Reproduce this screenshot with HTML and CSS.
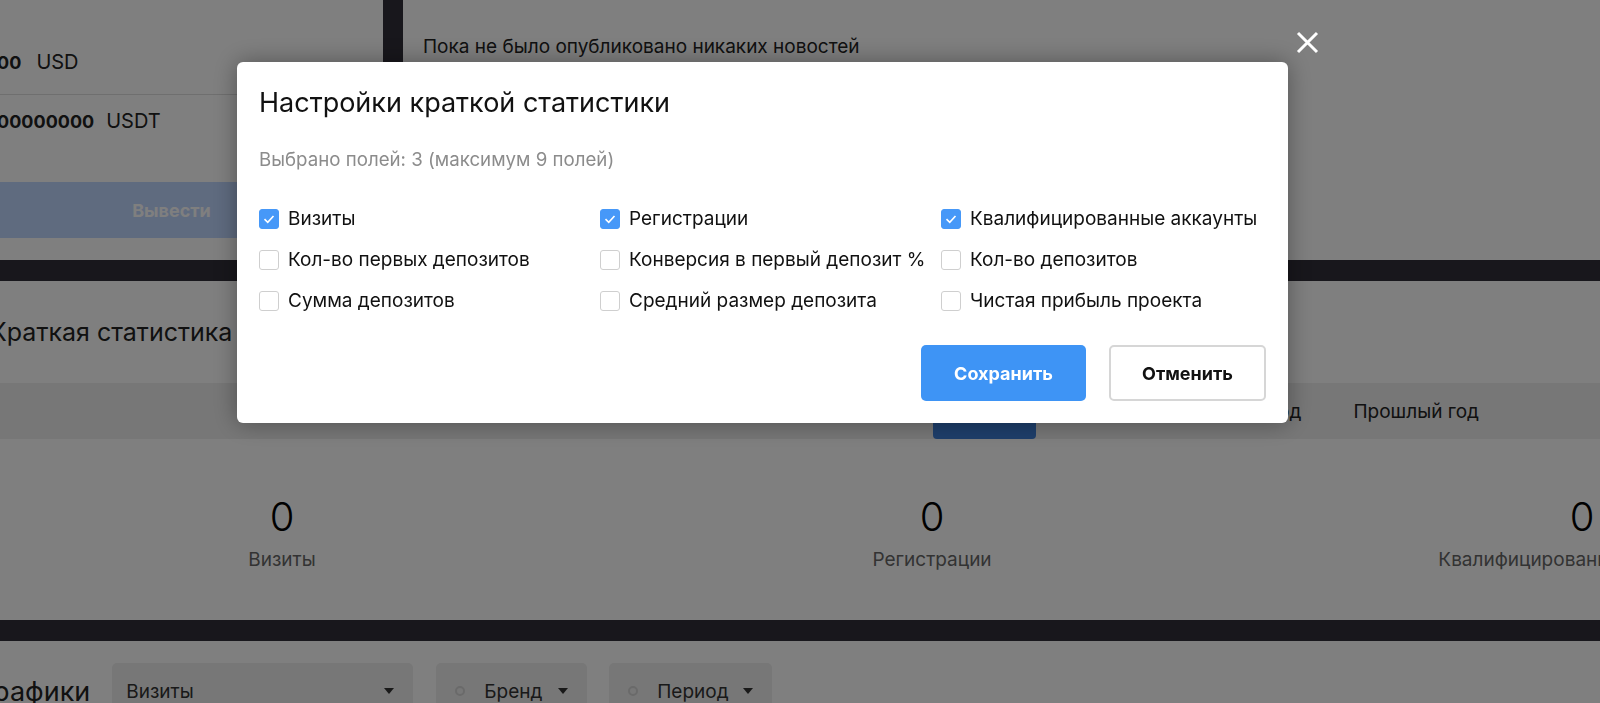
FILE: index.html
```html
<!DOCTYPE html>
<html lang="ru">
<head>
  <meta charset="UTF-8">
  <meta name="viewport" content="width=device-width, initial-scale=1.0">
  <title>Партнёрский кабинет</title>
  <link rel="stylesheet" href="styles.css">
</head>
<body>
  <!-- Page behind the dialog -->
  <div class="page">
    <div class="top-row">
      <div class="card wallet">
        <div class="balance-row first"><b>0.00</b><span class="cur">USD</span></div>
        <div class="balance-row"><b>0.00000000</b><span class="cur">USDT</span></div>
        <button class="withdraw" disabled>Вывести</button>
      </div>
      <div class="card news">
        <p>Пока не было опубликовано никаких новостей</p>
      </div>
    </div>

    <!-- Short statistics -->
    <section class="card stats">
      <h2>Краткая статистика</h2>
      <div class="period-tabs">
        <span>Всё время</span>
        <span>Сегодня</span>
        <span class="active">Вчера</span>
        <span>Неделя</span>
        <span>Текущий год</span>
        <span>Прошлый год</span>
      </div>
      <div class="stat-grid">
        <div class="stat">
          <div class="stat-value">0</div>
          <div class="stat-label">Визиты</div>
        </div>
        <div class="stat">
          <div class="stat-value">0</div>
          <div class="stat-label">Регистрации</div>
        </div>
        <div class="stat">
          <div class="stat-value">0</div>
          <div class="stat-label">Квалифицированные аккаунты</div>
        </div>
      </div>
    </section>

    <!-- Charts -->
    <section class="card charts">
      <h2>Графики</h2>
      <div class="select select-metric">Визиты<span class="caret"></span></div>
      <div class="select select-brand"><span class="radio"></span>Бренд<span class="caret"></span></div>
      <div class="select select-period"><span class="radio"></span>Период<span class="caret"></span></div>
    </section>
  </div>

  <!-- Settings dialog -->
  <div class="overlay">
    <div class="modal">
      <button class="modal-close" aria-label="Закрыть">
        <svg width="23" height="23" viewBox="0 0 23 23"><path d="M2 2 L21 21 M21 2 L2 21" stroke="#fff" stroke-width="3" fill="none"/></svg>
      </button>
      <h3>Настройки краткой статистики</h3>
      <p class="modal-hint">Выбрано полей: 3 (максимум 9 полей)</p>

      <div class="field-grid">
        <label class="field"><input type="checkbox" checked><span class="box"><svg viewBox="0 0 20 20"><path d="M5 10.2 L8.6 13.6 L15 6.6"/></svg></span>Визиты</label>
        <label class="field"><input type="checkbox" checked><span class="box"><svg viewBox="0 0 20 20"><path d="M5 10.2 L8.6 13.6 L15 6.6"/></svg></span>Регистрации</label>
        <label class="field"><input type="checkbox" checked><span class="box"><svg viewBox="0 0 20 20"><path d="M5 10.2 L8.6 13.6 L15 6.6"/></svg></span>Квалифицированные аккаунты</label>
        <label class="field"><input type="checkbox"><span class="box"><svg viewBox="0 0 20 20"><path d="M5 10.2 L8.6 13.6 L15 6.6"/></svg></span>Кол-во первых депозитов</label>
        <label class="field"><input type="checkbox"><span class="box"><svg viewBox="0 0 20 20"><path d="M5 10.2 L8.6 13.6 L15 6.6"/></svg></span>Конверсия в первый депозит %</label>
        <label class="field"><input type="checkbox"><span class="box"><svg viewBox="0 0 20 20"><path d="M5 10.2 L8.6 13.6 L15 6.6"/></svg></span>Кол-во депозитов</label>
        <label class="field"><input type="checkbox"><span class="box"><svg viewBox="0 0 20 20"><path d="M5 10.2 L8.6 13.6 L15 6.6"/></svg></span>Сумма депозитов</label>
        <label class="field"><input type="checkbox"><span class="box"><svg viewBox="0 0 20 20"><path d="M5 10.2 L8.6 13.6 L15 6.6"/></svg></span>Средний размер депозита</label>
        <label class="field"><input type="checkbox"><span class="box"><svg viewBox="0 0 20 20"><path d="M5 10.2 L8.6 13.6 L15 6.6"/></svg></span>Чистая прибыль проекта</label>
      </div>

      <div class="modal-actions">
        <button class="btn btn-primary">Сохранить</button>
        <button class="btn btn-secondary">Отменить</button>
      </div>
    </div>
  </div>
</body>
</html>
```

FILE: styles.css
```css
html,
body {
  height: 703px;
  overflow: hidden;
}

body {
  margin: 0;
  background-color: #302e38;
  font-family: Inter, "Noto Sans", sans-serif;
  color: #222;
}


/* page behind the dialog */
.page {
  margin-left: -40px;
  width: 1950px;
  display: flex;
  flex-direction: column;
  gap: 21px;
}

.card {
  background-color: #fff;
}

.top-row {
  display: flex;
  gap: 20px;
  height: 260px;
}

.wallet {
  width: 423px;
  padding: 47px 20px 23px;
  box-sizing: border-box;
}

.balance-row {
  font-size: 20px;
  line-height: 30px;
}

.balance-row b {
  font-size: 18px;
  font-weight: 700;
}

.balance-row .cur {
  margin-left: 12px;
}

.balance-row.first {
  padding-bottom: 16px;
  border-bottom: 1px solid #dedede;
}

.balance-row.first .cur {
  margin-left: 15px;
}

.balance-row + .balance-row {
  padding-top: 11px;
}

.withdraw {
  display: block;
  width: 100%;
  height: 56px;
  margin-top: 45px;
  background-color: #bed6ff;
  border: 0;
  border-radius: 4px;
  color: #fff;
  font: 700 18px Inter, sans-serif;
}

.news {
  flex: 1;
  padding: 0 20px;
}

.news p {
  margin: 0;
  padding-top: 35px;
  font-size: 19px;
  line-height: 24px;
}


/* short statistics */
.stats {
  padding: 36px 0 48px;
}

.stats h2,
.charts h2 {
  margin: 0;
  font-weight: 400;
}

.stats h2 {
  margin: 0 0 36px 30px;
  font-size: 25px;
  line-height: 30px;
}

.period-tabs {
  display: flex;
  justify-content: flex-end;
  height: 56px;
  padding-right: 405px;
  background-color: #eee;
}

.period-tabs span {
  display: flex;
  align-items: center;
  padding: 0 26px;
  font-size: 19px;
}

.period-tabs .active {
  padding: 0 23px;
  background-color: #3d7dd6;
  color: #fff;
  border-radius: 4px;
}

.stat-grid {
  display: grid;
  grid-template-columns: repeat(3, 650px);
  margin: 54px 0 0 -3px;
  text-align: center;
}

.stat-value {
  font-size: 40px;
  line-height: 48px;
  font-weight: 300;
  color: #000;
}

.stat-label {
  margin-top: 7px;
  font-size: 19px;
  line-height: 24px;
  color: #666;
  white-space: nowrap;
}


/* charts */
.charts {
  display: flex;
  align-items: flex-start;
  height: 120px;
  padding-top: 22px;
}

.charts h2 {
  margin: 12px 0 0 19px;
  font-size: 27px;
  line-height: 34px;
}

.select {
  display: flex;
  align-items: center;
  height: 56px;
  padding: 0 19px 0 14px;
  box-sizing: border-box;
  background-color: #eee;
  border-radius: 5px;
  font-size: 19px;
  color: #333;
}

.select-metric {
  width: 301px;
  margin-left: 22px;
}

.select-brand {
  width: 151px;
  margin-left: 23px;
  padding-left: 19px;
}

.select-period {
  width: 163px;
  margin-left: 22px;
  padding-left: 19px;
}

.select .caret {
  margin-left: auto;
  width: 0;
  height: 0;
  border-left: 5px solid transparent;
  border-right: 5px solid transparent;
  border-top: 6px solid #333;
}

.select .radio {
  width: 10px;
  height: 10px;
  margin-right: 19px;
  box-sizing: border-box;
  border: 2px solid #d4d4d4;
  border-radius: 50%;
}


/* dialog */
.overlay {
  position: fixed;
  top: 0;
  left: 0;
  right: 0;
  bottom: 0;
  background-color: rgba(0, 0, 0, 0.5);
}

.modal {
  position: relative;
  width: 1051px;
  margin: 62px 0 0 237px;
  padding: 24px 22px 22px;
  box-sizing: border-box;
  background-color: #fff;
  border-radius: 6px;
  box-shadow: 0 0 24px rgba(0, 0, 0, 0.35);
}

.modal-close {
  position: absolute;
  top: -31px;
  right: -31px;
  width: 23px;
  height: 23px;
  padding: 0;
  background: none;
  border: 0;
}

.modal-close svg {
  display: block;
}

.modal h3 {
  margin: 0;
  font-size: 27px;
  line-height: 34px;
  font-weight: 400;
  color: #111;
}

.modal-hint {
  margin: 30px 0 0;
  font-size: 18.7px;
  line-height: 20px;
  color: #8c8c8c;
}

.field-grid {
  display: grid;
  grid-template-columns: 341px 341px 1fr;
  row-gap: 21px;
  margin-top: 39px;
}

.field {
  display: flex;
  align-items: center;
  gap: 9px;
  height: 20px;
  font-size: 19px;
  line-height: 20px;
  color: #111;
  white-space: nowrap;
}

.field input {
  display: none;
}

.box {
  flex: none;
  width: 20px;
  height: 20px;
  box-sizing: border-box;
  border: 1px solid #cfcfcf;
  border-radius: 3px;
}

.box svg {
  display: none;
  width: 18px;
  height: 18px;
  fill: none;
  stroke: #fff;
  stroke-width: 1.8;
}

.field input:checked + .box {
  background-color: #4698f8;
  border-color: #4698f8;
}

.field input:checked + .box svg {
  display: block;
}

.modal-actions {
  display: flex;
  justify-content: flex-end;
  gap: 23px;
  margin-top: 34px;
}

.btn {
  height: 56px;
  border-radius: 5px;
  font: 700 18px Inter, sans-serif;
  cursor: pointer;
}

.btn-primary {
  width: 165px;
  background-color: #3e94f5;
  border: 0;
  color: #fff;
}

.btn-secondary {
  width: 157px;
  background-color: #fff;
  border: 2px solid #d6d6d6;
  color: #111;
}
```
